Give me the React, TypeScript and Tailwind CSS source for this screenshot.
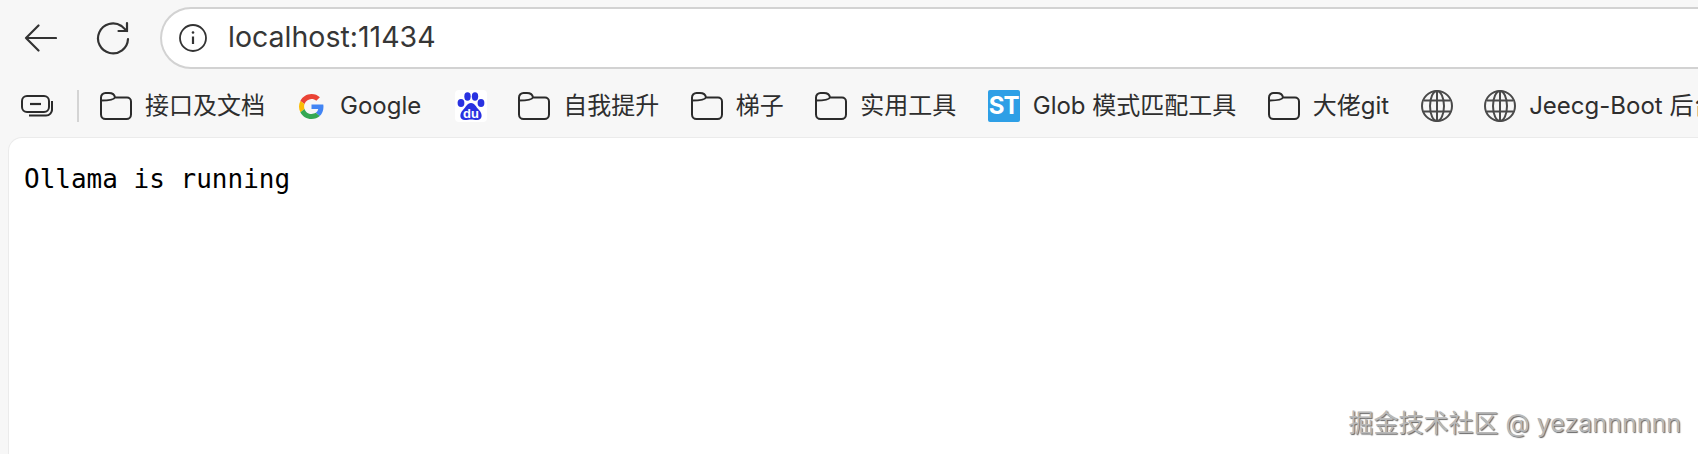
import type { ReactNode } from "react";

const uiFont = "font-['Inter','Noto_Sans_CJK_SC',sans-serif]";

function FolderIcon() {
  return (
    <svg width="32" height="28" viewBox="0 0 32 28" fill="none" stroke="#2b2b2b" strokeWidth="2" strokeLinejoin="round" className="shrink-0">
      <path d="M1 7V22.500A4.500 4.500 0 0 0 5.500 27H26.500A4.500 4.500 0 0 0 31 22.500V9.500A4 4 0 0 0 27 5.500H15C14.500 2.500 12 1 9 1H5.500A4.500 4.500 0 0 0 1 5.500V8.500C7 8.500 14 8 15 5.500" />
    </svg>
  );
}

function GlobeIcon() {
  return (
    <svg width="32" height="32" viewBox="0 0 32 32" fill="none" stroke="#4a4a4a" strokeWidth="2" className="shrink-0">
      <circle cx="16" cy="16" r="15" />
      <ellipse cx="16" cy="16" rx="7" ry="15" />
      <path d="M16 1V31M3 10.500H29M3 21.500H29" />
    </svg>
  );
}

function GoogleIcon() {
  return (
    <svg width="25" height="25" viewBox="0 0 48 48" className="shrink-0">
      <path fill="#EA4335" d="M24 9.500c3.500 0 6.700 1.200 9.200 3.600l6.900-6.900C35.900 2.400 30.500 0 24 0 14.600 0 6.500 5.400 2.600 13.200l8 6.200C12.500 13.600 17.800 9.500 24 9.500z" />
      <path fill="#4285F4" d="M47 24.500c0-1.600-.1-3.100-.4-4.500H24v9h12.900c-.6 3-2.200 5.500-4.700 7.200l7.700 6c4.500-4.200 7.100-10.300 7.100-17.700z" />
      <path fill="#FBBC05" d="M10.600 28.600c-.5-1.400-.8-3-.8-4.600s.3-3.200.8-4.600l-8-6.200C.9 16.500 0 20.100 0 24s.9 7.500 2.600 10.800l8-6.200z" />
      <path fill="#34A853" d="M24 48c6.500 0 11.900-2.100 15.900-5.800l-7.700-6c-2.200 1.400-4.900 2.300-8.200 2.300-6.200 0-11.500-4.200-13.400-9.800l-8 6.200C6.500 42.600 14.600 48 24 48z" />
    </svg>
  );
}

function BaiduIcon() {
  return (
    <svg width="32" height="32" viewBox="0 0 32 32" className="shrink-0 rounded bg-white">
      <g fill="#2932e1">
        <ellipse cx="6" cy="13" rx="3.400" ry="4" />
        <ellipse cx="12.500" cy="6.500" rx="3.200" ry="4.200" />
        <ellipse cx="20" cy="6.500" rx="3.200" ry="4.200" />
        <ellipse cx="26" cy="13" rx="3.400" ry="4" />
        <path d="M16 13C12 13 11 17 8 20C4 24 4.500 30 10 30C12.500 30 14 29.500 16 29.500C18 29.500 19.500 30 22 30C27.500 30 28 24 24 20C21 17 20 13 16 13Z" />
      </g>
      <text x="16" y="28" textAnchor="middle" fontSize="13" fontWeight="700" fill="#fff" fontFamily="Liberation Sans, sans-serif">du</text>
    </svg>
  );
}

function Bookmark({ icon, label, className = "" }: { icon: ReactNode; label?: string; className?: string }) {
  return (
    <div className={`flex shrink-0 items-center gap-[13px] ${className}`}>
      {icon}
      {label && <span className="whitespace-nowrap text-[24px] leading-8 text-[#2e2e2e]">{label}</span>}
    </div>
  );
}

export default function App() {
  return (
    <div className={`relative flex h-[454px] w-[1698px] flex-col overflow-hidden bg-[#f7f7f7] ${uiFont}`}>
      {/* toolbar */}
      <div className="flex h-[75px] shrink-0 items-center pl-6">
        <svg width="33" height="28" viewBox="0 0 33 28" fill="none" stroke="#333" strokeWidth="2.200" strokeLinecap="round" strokeLinejoin="round" className="shrink-0">
          <path d="M32 14H2M14.500 1.500L2 14L14.500 26.500" />
        </svg>
        <svg width="34" height="34" viewBox="0 0 34 34" fill="none" stroke="#333" strokeWidth="2.200" strokeLinecap="round" strokeLinejoin="round" className="ml-[39px] shrink-0">
          <path d="M32 18A15 15 0 1 1 25.500 5L31 10" />
          <path d="M31 2V10H22.500" />
        </svg>
        <div className="ml-[30px] flex h-[62px] flex-1 items-center rounded-l-[31px] border-2 border-r-0 border-[#d2d2d2] bg-white pl-[17px]">
          <svg width="28" height="28" viewBox="0 0 28 28" fill="none" stroke="#333" strokeWidth="1.800" className="shrink-0">
            <circle cx="14" cy="14" r="13" />
            <path d="M14 12.500V20" strokeWidth="2.200" />
            <circle cx="14" cy="8.500" r="1.300" fill="#333" stroke="none" />
          </svg>
          <span className="ml-[21px] text-[28.500px] text-[#363636]">localhost:11434</span>
        </div>
      </div>

      {/* bookmarks bar */}
      <div className="flex h-[62px] shrink-0 items-center pl-[21px]">
        <svg width="32" height="22" viewBox="0 0 32 22" fill="none" stroke="#2b2b2b" strokeWidth="2" className="shrink-0">
          <rect x="1" y="1" width="27" height="16" rx="5" />
          <path d="M9 9H20" strokeWidth="2.200" />
          <path d="M31 6V14A6 6 0 0 1 25 20.500H8" />
        </svg>
        <div className="ml-[24px] mr-[21px] h-8 w-0.5 shrink-0 bg-[#d4d4d4]" />
        <div className="flex items-center gap-[31.500px]">
          <Bookmark icon={<FolderIcon />} label="接口及文档" />
          <Bookmark icon={<GoogleIcon />} label="Google" className="ml-[2.500px] !gap-4" />
          <Bookmark icon={<BaiduIcon />} className="ml-[2px]" />
          <Bookmark icon={<FolderIcon />} label="自我提升" />
          <Bookmark icon={<FolderIcon />} label="梯子" />
          <Bookmark icon={<FolderIcon />} label="实用工具" />
          <Bookmark
            icon={
              <div className="flex h-8 w-8 shrink-0 items-center justify-center rounded-[2px] bg-[#2e9fe6] text-[24px] font-bold tracking-[-1px] text-white">
                ST
              </div>
            }
            label="Glob 模式匹配工具"
          />
          <Bookmark icon={<FolderIcon />} label="大佬git" />
          <Bookmark icon={<GlobeIcon />} />
          <Bookmark icon={<GlobeIcon />} label="Jeecg-Boot 后台管理系统" />
        </div>
      </div>

      {/* page */}
      <div className="ml-2 flex-1 rounded-tl-[14px] border-l border-t border-[#ebebeb] bg-white pl-[15px] pt-[24px]">
        <pre className="font-['DejaVu_Sans_Mono',monospace] text-[26px] leading-[34px] text-black">Ollama is running</pre>
      </div>

      {/* watermark */}
      <div className="absolute bottom-[15px] right-[17px] whitespace-nowrap text-[25px] leading-8 text-[#b8b8b8] [text-shadow:1px_1px_1px_#666]">
        掘金技术社区 @ yezannnnnn
      </div>
    </div>
  );
}
